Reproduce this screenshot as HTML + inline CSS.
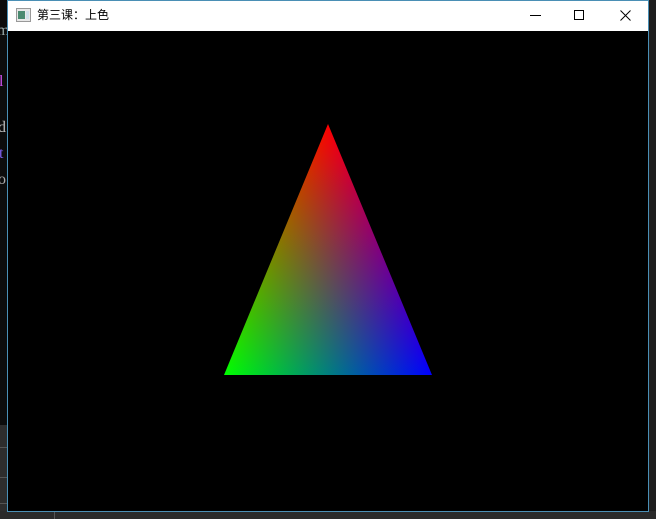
<!DOCTYPE html>
<html><head><meta charset="utf-8"><style>
html,body{margin:0;padding:0;width:656px;height:519px;overflow:hidden;background:#1e1e1e;position:relative;font-family:"Liberation Sans","Noto Sans CJK SC",sans-serif}
.lt{position:absolute;left:-1px;font-family:"Liberation Serif",serif;font-size:16px;line-height:17px}
</style></head><body>
<div style="position:absolute;left:0;top:0;width:8px;height:425px;background:#0c0c0c"></div>
<div class="lt" style="top:22px;left:-3px;color:#9aa">m</div>
<div class="lt" style="top:73px;color:#d050f0">l</div>
<div class="lt" style="top:119px;left:-2px;color:#bbb">d</div>
<div class="lt" style="top:145px;color:#8060f0">t</div>
<div class="lt" style="top:171px;left:-2px;color:#aaa">o</div>
<div style="position:absolute;left:0;top:425px;width:8px;height:94px;background:#2d2d2d"></div>
<div style="position:absolute;left:0;top:447px;width:8px;height:1px;background:#555"></div>
<div style="position:absolute;left:0;top:477px;width:8px;height:1px;background:#555"></div>
<div style="position:absolute;left:0;top:503px;width:8px;height:1px;background:#555"></div>
<div style="position:absolute;left:0;top:511px;width:656px;height:8px;background:#2a2a2a"></div>
<div style="position:absolute;left:54px;top:512px;width:1px;height:7px;background:#555"></div>
<div style="position:absolute;left:7px;top:0;width:642px;height:512px;background:#4a8fb5"></div>
<div style="position:absolute;left:8px;top:1px;width:640px;height:30px;background:#fff"></div>
<div style="position:absolute;left:8px;top:31px;width:640px;height:480px;background:#000"></div>
<svg style="position:absolute;left:16px;top:8px" width="15" height="14"><rect x="0.5" y="0.5" width="14" height="13" fill="#e8e8e8" stroke="#999"/><rect x="2" y="3" width="7" height="8" fill="#4a8a70"/><rect x="10" y="3" width="3" height="8" fill="#cfe0e8"/></svg>
<div style="position:absolute;left:37px;top:8px;font-size:12px;line-height:14px;color:#000">第三课：上色</div>
<svg style="position:absolute;left:520px;top:1px" width="128" height="30">
<line x1="10" y1="14.5" x2="21" y2="14.5" stroke="#000"/>
<rect x="54.5" y="9.5" width="9" height="9" fill="none" stroke="#000"/>
<path d="M100.5 9.5 L110.5 19.5 M110.5 9.5 L100.5 19.5" stroke="#000" fill="none"/>
</svg>
<svg style="position:absolute;left:0;top:0" width="656" height="519">
<defs>
<linearGradient id="r" gradientUnits="userSpaceOnUse" x1="328" y1="124" x2="328" y2="375"><stop offset="0" stop-color="#f00"/><stop offset="1" stop-color="#000"/></linearGradient>
<linearGradient id="g" gradientUnits="userSpaceOnUse" x1="224" y1="375" x2="401.5" y2="301.5"><stop offset="0" stop-color="#0f0"/><stop offset="1" stop-color="#000"/></linearGradient>
<linearGradient id="b" gradientUnits="userSpaceOnUse" x1="432" y1="375" x2="254.5" y2="301.5"><stop offset="0" stop-color="#00f"/><stop offset="1" stop-color="#000"/></linearGradient>
</defs>
<g style="isolation:isolate">
<polygon points="328,124 224,375 432,375" fill="url(#r)"/>
<polygon points="328,124 224,375 432,375" fill="url(#g)" style="mix-blend-mode:plus-lighter"/>
<polygon points="328,124 224,375 432,375" fill="url(#b)" style="mix-blend-mode:plus-lighter"/>
</g>
</svg>
</body></html>
